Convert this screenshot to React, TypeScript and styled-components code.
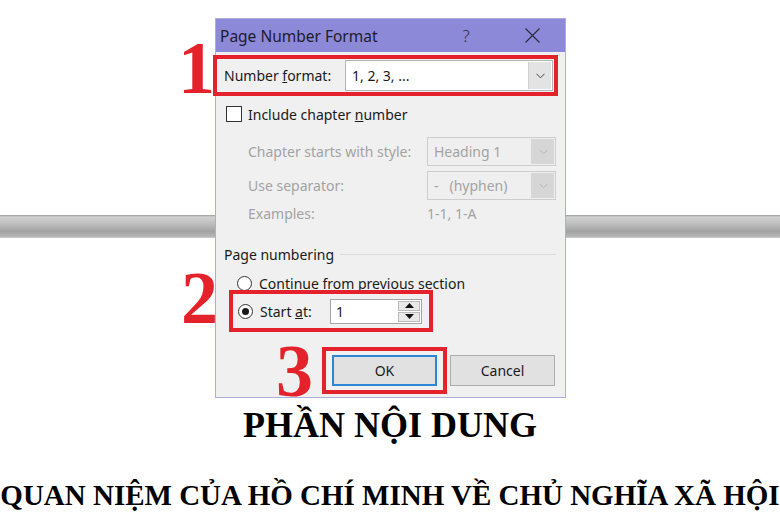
import React from 'react'
import styled, { createGlobalStyle } from 'styled-components'

const RED = '#e3222b'

const GlobalStyle = createGlobalStyle`
  html, body {
    margin: 0;
    padding: 0;
    background: #fff;
  }
  body {
    font-family: 'Noto Sans', 'DejaVu Sans', sans-serif;
  }
`

const Page = styled.div`
  position: relative;
  width: 780px;
  height: 520px;
  overflow: hidden;
  background: #fff;
`

const Rod = styled.div`
  margin-top: 215px;
  height: 23px;
  background: linear-gradient(
    to bottom,
    #9a9a9a 0,
    #d2d2d2 2px,
    #c0c0c0 35%,
    #a2a2a2 72%,
    #b4b4b4 92%,
    #cbcbcb 100%
  );
`

const Heading = styled.h1`
  margin: 169px 0 0;
  font: bold 36px/36px 'Liberation Serif', 'Times New Roman', serif;
  text-align: center;
  color: #000;
`

const Subheading = styled.h2`
  margin: 38px 0 0;
  font: bold 29px/29px 'Liberation Serif', 'Times New Roman', serif;
  text-align: center;
  white-space: nowrap;
  color: #000;
`

const Mark = styled.span<{ $x: number; $y: number }>`
  position: absolute;
  left: ${({ $x }) => $x}px;
  top: ${({ $y }) => $y}px;
  font: bold 74px/74px 'Liberation Serif', 'Times New Roman', serif;
  color: ${RED};
`

const Dialog = styled.div`
  position: absolute;
  left: 215px;
  top: 18px;
  width: 351px;
  height: 380px;
  box-sizing: border-box;
  border: 1px solid #aeacd9;
  background: #f0f0f0;
  font-size: 14px;
  color: #1a1a1a;
  display: flex;
  flex-direction: column;
`

const TitleBar = styled.div`
  height: 33px;
  background: #8c89d8;
  display: flex;
  align-items: center;
  padding-left: 4px;
`

const Title = styled.span`
  flex: 1;
  font-size: 15.5px;
  color: #1c1c2c;
`

const TitleButton = styled.div`
  width: 66px;
  height: 33px;
  display: flex;
  align-items: center;
  justify-content: center;
  font-size: 17px;
  font-weight: 300;
  color: #2a2a3a;
`

const FormatBox = styled.div`
  margin: 3px 0 0 -3px;
  width: 345px;
  height: 41px;
  box-sizing: border-box;
  border: 4px solid ${RED};
  display: flex;
  align-items: center;
  padding-left: 7px;
`

const Label = styled.span<{ $w?: number; $muted?: boolean }>`
  width: ${({ $w }) => ($w ? `${$w}px` : 'auto')};
  flex-shrink: 0;
  white-space: nowrap;
  color: ${({ $muted }) => ($muted ? '#a3a3a3' : '#1a1a1a')};
`

const Combo = styled.div<{ $w: number; $h: number; $disabled?: boolean }>`
  width: ${({ $w }) => $w}px;
  height: ${({ $h }) => $h}px;
  box-sizing: border-box;
  border: 1px solid ${({ $disabled }) => ($disabled ? '#cdcdcd' : '#b4b4b4')};
  background: ${({ $disabled }) => ($disabled ? '#efefef' : '#fff')};
  color: ${({ $disabled }) => ($disabled ? '#a3a3a3' : '#1a1a1a')};
  display: flex;
  align-items: center;
  padding: 1px;
`

const ComboValue = styled.span`
  flex: 1;
  padding-left: 5px;
  white-space: pre;
`

const ComboArrow = styled.div<{ $disabled?: boolean }>`
  width: 22px;
  align-self: stretch;
  display: flex;
  align-items: center;
  justify-content: center;
  background: ${({ $disabled }) => ($disabled ? '#d6d6d6' : '#e3e3e3')};
  border-left: 1px solid ${({ $disabled }) => ($disabled ? '#d6d6d6' : '#d0d0d0')};
`

const CheckRow = styled.div`
  margin: 10px 0 0 10px;
  height: 16px;
  display: flex;
  align-items: center;
  gap: 6px;
`

const CheckBox = styled.span`
  width: 16px;
  height: 16px;
  box-sizing: border-box;
  border: 1px solid #333;
  background: #fff;
`

const MutedRow = styled.div<{ $top: number; $h: number }>`
  margin-top: ${({ $top }) => $top}px;
  height: ${({ $h }) => $h}px;
  padding-left: 32px;
  display: flex;
  align-items: center;
`

const GroupHeader = styled.div`
  margin: 21px 9px 0 8px;
  height: 20px;
  display: flex;
  align-items: center;
  gap: 6px;
`

const Rule = styled.span`
  flex: 1;
  height: 1px;
  background: #dcdcdc;
`

const RadioRow = styled.div`
  margin: 10px 0 0 21px;
  height: 18px;
  display: flex;
  align-items: center;
  gap: 7px;
`

const Radio = styled.span<{ $on?: boolean }>`
  width: 15px;
  height: 15px;
  box-sizing: border-box;
  border-radius: 50%;
  border: 1px solid #333;
  background: #fff;
  display: flex;
  align-items: center;
  justify-content: center;

  &::after {
    content: '';
    display: ${({ $on }) => ($on ? 'block' : 'none')};
    width: 7px;
    height: 7px;
    border-radius: 50%;
    background: #1a1a1a;
  }
`

const StartBox = styled.div`
  margin: -2px 0 0 13px;
  width: 204px;
  height: 42px;
  box-sizing: border-box;
  border: 4px solid ${RED};
  padding-left: 5px;
  display: flex;
  align-items: center;
  gap: 7px;
`

const SpinField = styled.div`
  width: 92px;
  height: 25px;
  box-sizing: border-box;
  border: 1px solid #a5a5a5;
  background: #fff;
  display: flex;
  align-items: stretch;
  padding: 1px;
`

const SpinValue = styled.span`
  flex: 1;
  padding-left: 4px;
  line-height: 21px;
`

const SpinButtons = styled.div`
  width: 22px;
  display: flex;
  flex-direction: column;
  gap: 1px;
`

const SpinButton = styled.div`
  flex: 1;
  background: #e8e8e8;
  border: 1px solid #bcbcbc;
  display: flex;
  align-items: center;
  justify-content: center;
`

const ButtonRow = styled.div`
  margin-top: 15px;
  padding-left: 106px;
  display: flex;
  align-items: center;
  gap: 3px;
`

const OkBox = styled.div`
  border: 4px solid ${RED};
  padding: 4px 6px;
`

const Button = styled.div<{ $primary?: boolean }>`
  width: 105px;
  height: 31px;
  box-sizing: border-box;
  border: ${({ $primary }) => ($primary ? '2px solid #2b86d6' : '1px solid #adadad')};
  background: #e1e1e1;
  display: flex;
  align-items: center;
  justify-content: center;
`

const Chevron = ({ color }: { color: string }) => (
  <svg width='9' height='6' viewBox='0 0 9 6'>
    <path d='M0.5 0.8 L4.5 4.8 L8.5 0.8' fill='none' stroke={color} strokeWidth='1' />
  </svg>
)

const Triangle = ({ up }: { up?: boolean }) => (
  <svg width='9' height='5' viewBox='0 0 9 5'>
    <path d={up ? 'M0 5 L4.5 0 L9 5 Z' : 'M0 0 L4.5 5 L9 0 Z'} fill='#111' />
  </svg>
)

const App: React.FC = () => (
  <Page>
    <GlobalStyle />
    <Rod />
    <Heading>PHẦN NỘI DUNG</Heading>
    <Subheading>QUAN NIỆM CỦA HỒ CHÍ MINH VỀ CHỦ NGHĨA XÃ HỘI</Subheading>

    <Dialog>
      <TitleBar>
        <Title>Page Number Format</Title>
        <TitleButton>?</TitleButton>
        <TitleButton>
          <svg width='15' height='15' viewBox='0 0 15 15'>
            <path d='M0.5 0.5 L14.5 14.5 M14.5 0.5 L0.5 14.5' stroke='#2a2a3a' strokeWidth='1.1' />
          </svg>
        </TitleButton>
      </TitleBar>

      <FormatBox>
        <Label $w={121}>
          Number <u>f</u>ormat:
        </Label>
        <Combo $w={208} $h={31}>
          <ComboValue>1, 2, 3, ...</ComboValue>
          <ComboArrow>
            <Chevron color='#444' />
          </ComboArrow>
        </Combo>
      </FormatBox>

      <CheckRow>
        <CheckBox />
        <Label>
          Include chapter <u>n</u>umber
        </Label>
      </CheckRow>

      <MutedRow $top={15} $h={29}>
        <Label $w={179} $muted>
          Chapter starts with style:
        </Label>
        <Combo $w={129} $h={29} $disabled>
          <ComboValue>Heading 1</ComboValue>
          <ComboArrow $disabled>
            <Chevron color='#b5b5b5' />
          </ComboArrow>
        </Combo>
      </MutedRow>
      <MutedRow $top={5} $h={29}>
        <Label $w={179} $muted>
          Use separator:
        </Label>
        <Combo $w={129} $h={29} $disabled>
          <ComboValue>{'-   (hyphen)'}</ComboValue>
          <ComboArrow $disabled>
            <Chevron color='#b5b5b5' />
          </ComboArrow>
        </Combo>
      </MutedRow>
      <MutedRow $top={3} $h={20}>
        <Label $w={179} $muted>
          Examples:
        </Label>
        <Label $muted>1-1, 1-A</Label>
      </MutedRow>

      <GroupHeader>
        <Label>Page numbering</Label>
        <Rule />
      </GroupHeader>

      <RadioRow>
        <Radio />
        <Label>
          <u>C</u>ontinue from previous section
        </Label>
      </RadioRow>

      <StartBox>
        <Radio $on />
        <Label $w={63}>
          Start <u>a</u>t:
        </Label>
        <SpinField>
          <SpinValue>1</SpinValue>
          <SpinButtons>
            <SpinButton>
              <Triangle up />
            </SpinButton>
            <SpinButton>
              <Triangle />
            </SpinButton>
          </SpinButtons>
        </SpinField>
      </StartBox>

      <ButtonRow>
        <OkBox>
          <Button $primary>OK</Button>
        </OkBox>
        <Button>Cancel</Button>
      </ButtonRow>
    </Dialog>

    <Mark $x={178} $y={31}>1</Mark>
    <Mark $x={181} $y={261}>2</Mark>
    <Mark $x={276} $y={334}>3</Mark>
  </Page>
)

export default App
